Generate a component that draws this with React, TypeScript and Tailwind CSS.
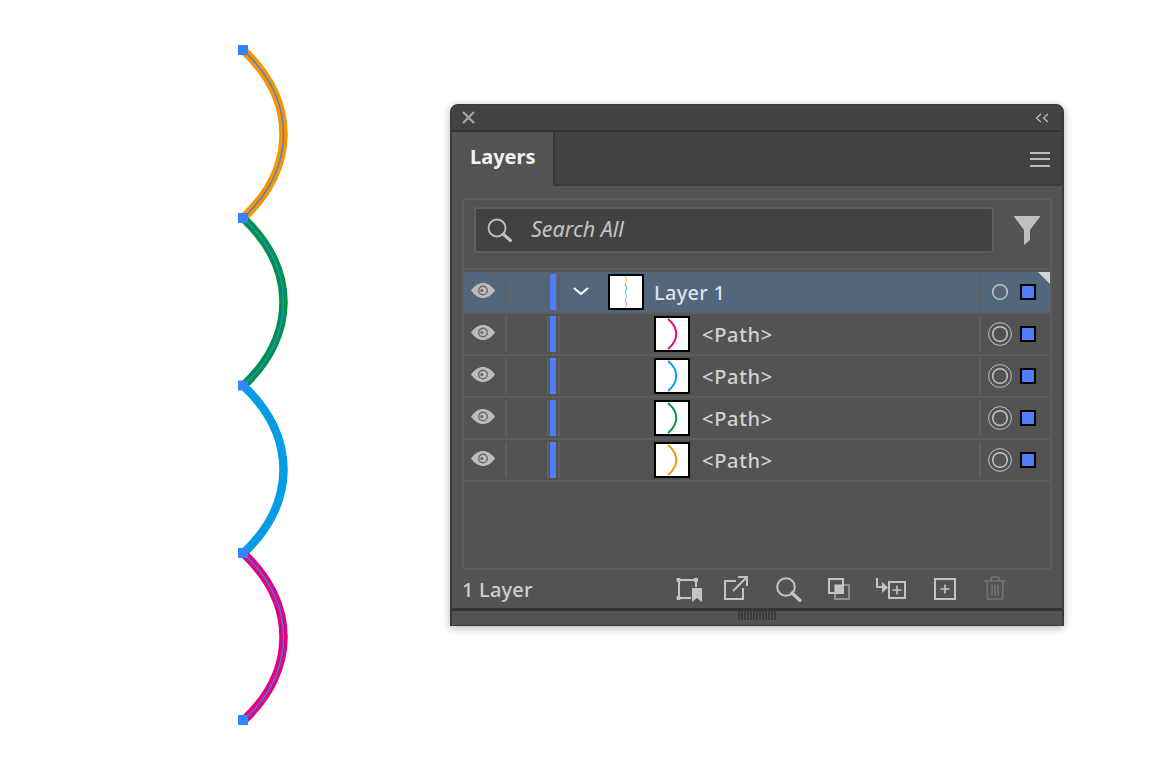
const FONT = "[font-family:'Noto_Sans',sans-serif]";

const curves = [
  { y: 10, color: "#f79400", line: "#2f86f0" },
  { y: 178, color: "#009245", line: "#2f86f0" },
  { y: 345.5, color: "#009fe3", line: "#1f90f0" },
  { y: 513, color: "#e6007e", line: "#2f86f0" },
];

function Curves() {
  return (
    <svg width="70" height="690" viewBox="0 0 70 690" className="ml-[230px] mt-[40px] shrink-0">
      {curves.map((c) => {
        const d = `M13 ${c.y} C 67 ${c.y + 50} 67 ${c.y + 118} 13 ${c.y + 168}`;
        return (
          <g key={c.y} fill="none">
            <path d={d} stroke={c.color} strokeWidth="8.5" />
            <path d={d} stroke={c.line} strokeWidth="1.3" />
          </g>
        );
      })}
      {[10, 178, 345.5, 513, 680].map((y) => (
        <rect key={y} x="8" y={y - 5} width="10" height="10" fill="#2f86ff" />
      ))}
    </svg>
  );
}

function Eye() {
  return (
    <svg width="24" height="15" viewBox="0 0 24 15">
      <path d="M0 7.5 C 5 1 9 0 12 0 C 15 0 19 1 24 7.5 C 19 14 15 15 12 15 C 9 15 5 14 0 7.5 Z" fill="#bcbcbc" />
      <circle cx="12" cy="7.5" r="5" fill="#6a6a6a" />
      <circle cx="12" cy="7.5" r="3.6" fill="#bcbcbc" />
      <circle cx="10.8" cy="7.5" r="1.5" fill="#666666" />
    </svg>
  );
}

function Thumb({ color }: { color: string }) {
  return (
    <div className="w-[36px] h-[36px] bg-white border-2 border-black shrink-0">
      <svg width="32" height="32" viewBox="0 0 32 32" className="block">
        <path d="M12 1 C 23 10 23 22 12 31" fill="none" stroke={color} strokeWidth="1.9" />
      </svg>
    </div>
  );
}

function LayerThumb() {
  return (
    <div className="w-[36px] h-[36px] bg-white border-2 border-black shrink-0">
      <svg width="32" height="32" viewBox="0 0 32 32" className="block" fill="none" strokeWidth="1">
        <path d="M15 0 C 17 3 17 6 15 8" stroke="#f7a850" />
        <path d="M15 8 C 17 11 17 14 15 16" stroke="#30a870" />
        <path d="M15 16 C 17 19 17 22 15 24" stroke="#4cbcf0" />
        <path d="M15 24 C 17 27 17 30 15 32" stroke="#f060a8" />
      </svg>
    </div>
  );
}

function Row({
  selected,
  color,
}: {
  selected?: boolean;
  color?: string;
}) {
  return (
    <div className={`relative flex h-[42px] border-b-2 border-[#5c5c5c] ${selected ? "bg-[#52667c]" : ""}`}>
      <div className="w-[41px] shrink-0 flex items-center justify-center pr-[3px] pb-[4px]">
        <Eye />
      </div>
      <div className="w-[42px] shrink-0 my-[2px] border-l-2 border-[#5f5f5f]" />
      <div className="w-[13px] shrink-0 my-[2px] border-x-2 border-[#5f5f5f] flex pl-[1px]">
        <div className="w-[6px] bg-[#4f7dff]" />
      </div>
      {selected ? (
        <div className="flex items-center flex-1">
          <svg width="16" height="8" viewBox="0 0 16 8" className="ml-[13px] mb-[2px]">
            <path d="M1 1 L8 7 L15 1" fill="none" stroke="#fff" strokeWidth="2" />
          </svg>
          <div className="ml-[19px]">
            <LayerThumb />
          </div>
          <span className="ml-[10px] pt-[2px] text-[20px] font-medium tracking-[0.3px] text-[#dde2e8]">Layer 1</span>
        </div>
      ) : (
        <div className="flex items-center flex-1 pl-[94px]">
          <Thumb color={color as string} />
          <span className="ml-[12px] pt-[2px] text-[20px] font-medium tracking-[0.7px] text-[#d2d2d2]">{"<Path>"}</span>
        </div>
      )}
      <div className="w-[71px] shrink-0 my-[2px] border-l-2 border-[#5f5f5f] flex items-center">
        <svg width="24" height="24" viewBox="0 0 24 24" className="ml-[7px]">
          {selected ? (
            <circle cx="12" cy="12" r="7.3" fill="none" stroke="#c4c4c4" strokeWidth="1.5" />
          ) : (
            <g fill="none" stroke="#c4c4c4">
              <circle cx="12" cy="12" r="11.4" strokeWidth="1" />
              <circle cx="12" cy="12" r="7.3" strokeWidth="1.5" />
            </g>
          )}
        </svg>
        <div className="ml-[8px] w-[16px] h-[16px] bg-[#4f7dff] border-2 border-black" />
      </div>
      {selected && (
        <svg width="12" height="12" viewBox="0 0 12 12" className="absolute right-0 top-0">
          <path d="M0 0 H12 V12 Z" fill="#d4d4d4" />
        </svg>
      )}
    </div>
  );
}

function FooterIcons() {
  return (
    <div className="flex items-start absolute left-[214px] top-[6px]">
      <svg width="26" height="25" viewBox="0 0 26 25" className="mt-[2px]">
        <g fill="none" stroke="#c4c4c4" strokeWidth="2">
          <path d="M3 2 H20 M3 2 V20 M3 20 H15 M20 2 V9" />
        </g>
        <g fill="#c4c4c4">
          <rect x="0.5" y="0" width="4" height="4" rx="1" />
          <rect x="18" y="0" width="4" height="4" rx="1" />
          <rect x="0.5" y="18" width="4" height="4" rx="1" />
          <path d="M16 10 H26 V24 L21 20 L16 24 Z" />
        </g>
      </svg>
      <svg width="24" height="24" viewBox="0 0 24 24" className="ml-[22px]">
        <g fill="none" stroke="#c4c4c4" strokeWidth="2">
          <path d="M12 5 H1 V23 H19 V12" />
          <path d="M9 15 L22 2 M14 1 H23 V10" />
        </g>
      </svg>
      <svg width="26" height="25" viewBox="0 0 26 25" className="ml-[28px] mt-[1px]">
        <circle cx="10" cy="10" r="8.8" fill="none" stroke="#c4c4c4" strokeWidth="2" />
        <path d="M16 16 L24 23.5" stroke="#c4c4c4" strokeWidth="3.2" strokeLinecap="round" />
      </svg>
      <svg width="22" height="22" viewBox="0 0 22 22" className="ml-[26px] mt-[2px]">
        <rect x="7" y="7" width="14" height="14" fill="none" stroke="#8f8f8f" strokeWidth="2" />
        <rect x="1" y="1" width="14" height="14" fill="none" stroke="#c4c4c4" strokeWidth="2" />
        <rect x="7" y="7" width="8" height="8" fill="#c4c4c4" />
      </svg>
      <svg width="30" height="21" viewBox="0 0 30 21" className="ml-[26px] mt-[2px]">
        <path d="M1 0 V9 H6" fill="none" stroke="#c4c4c4" strokeWidth="2" />
        <path d="M6 4 L12 9.5 L6 15 Z" fill="#c4c4c4" />
        <rect x="13" y="4" width="16" height="16" fill="none" stroke="#c4c4c4" strokeWidth="2" />
        <path d="M21 7.5 V16.5 M16.5 12 H25.5" stroke="#c4c4c4" strokeWidth="1.6" />
      </svg>
      <svg width="22" height="22" viewBox="0 0 22 22" className="ml-[28px] mt-[2px]">
        <rect x="1" y="1" width="20" height="20" fill="none" stroke="#c4c4c4" strokeWidth="2" />
        <path d="M11 6.5 V15.5 M6.5 11 H15.5" stroke="#c4c4c4" strokeWidth="1.6" />
      </svg>
      <svg width="22" height="24" viewBox="0 0 22 24" className="ml-[28px]">
        <g fill="none" stroke="#737373" strokeWidth="1.6">
          <path d="M0 5 H22 M7 5 V2 Q7 1 8 1 H14 Q15 1 15 2 V5" />
          <path d="M3 5 L3.5 23 H18.5 L19 5" />
          <path d="M8 8.5 V19.5 M11 8.5 V19.5 M14 8.5 V19.5" />
        </g>
      </svg>
    </div>
  );
}

function LayersPanel() {
  return (
    <div className={`ml-[150px] mt-[104px] w-[614px] h-[522px] shrink-0 flex flex-col border-x-2 border-t border-b border-[#3b3b3b] rounded-t-[8px] bg-[#535353] shadow-[0_2px_8px_rgba(0,0,0,0.3)] ${FONT}`}>
      <div className="h-[27px] shrink-0 bg-[#424242] border-b-2 border-[#353535] rounded-t-[7px] flex items-center justify-between pl-[10px] pr-[13px]">
        <svg width="13" height="13" viewBox="0 0 13 13">
          <path d="M1 1 L12 12 M12 1 L1 12" stroke="#a6a6a6" strokeWidth="2.2" />
        </svg>
        <svg width="14" height="10" viewBox="0 0 14 10">
          <path d="M6 1 L1.5 5 L6 9 M13 1 L8.5 5 L13 9" fill="none" stroke="#bdbdbd" strokeWidth="1.3" />
        </svg>
      </div>
      <div className="h-[54px] shrink-0 flex bg-[#424242]">
        <div className="w-[103px] h-[54px] bg-[#535353] border-r-2 border-[#383838] flex items-center pl-[18px] pb-[4px]">
          <span className="text-[20px] font-bold text-[#f2f2f2]">Layers</span>
        </div>
        <div className="flex-1 border-b-2 border-[#383838] flex items-center justify-end pt-[2px] pr-[12px]">
          <div className="w-[20px] flex flex-col gap-[4.5px]">
            <div className="h-[2px] bg-[#bdbdbd]" />
            <div className="h-[2px] bg-[#bdbdbd]" />
            <div className="h-[2px] bg-[#bdbdbd]" />
          </div>
        </div>
      </div>
      <div className="h-[422px] shrink-0 px-[10px] pt-[12px]">
        <div className="h-[372px] border-2 border-[#5c5c5c] rounded-[2px] flex flex-col">
          <div className="h-[68px] shrink-0 flex pl-[10px] pt-[7px]">
            <div className="w-[520px] h-[46px] bg-[#424242] border-2 border-[#5e5e5e] rounded-[3px] flex items-center pl-[11px]">
              <svg width="25" height="24" viewBox="0 0 25 24">
                <circle cx="10" cy="10" r="8.5" fill="none" stroke="#c0c0c0" strokeWidth="1.8" />
                <path d="M16 16 L23.5 22.5" stroke="#c0c0c0" strokeWidth="3" strokeLinecap="round" />
              </svg>
              <span className="ml-[19px] pb-[2px] text-[21.5px] italic text-[#c4c4c4]">Search All</span>
            </div>
            <svg width="28" height="29" viewBox="0 0 28 29" className="ml-[19px] mt-[9px]">
              <path d="M0.5 0 H27.5 L17 14 V24 L11 29 V14 Z" fill="#c0c0c0" />
            </svg>
          </div>
          <div className="flex-1 border-t-2 border-[#5c5c5c] pt-[2px]">
            <Row selected />
            <Row color="#e6007e" />
            <Row color="#009fe3" />
            <Row color="#009245" />
            <Row color="#f79400" />
          </div>
        </div>
        <div className="relative h-[38px] flex items-center pt-[2px]">
          <span className="text-[20px] font-medium tracking-[0.2px] text-[#cfcfcf]">1 Layer</span>
          <FooterIcons />
        </div>
      </div>
      <div className="h-[17px] shrink-0 border-t-[3px] border-[#343434] flex justify-center">
        <div className="flex gap-[1px] h-[9px]">
          {Array.from({ length: 13 }).map((_, i) => (
            <div key={i} className="w-[2px] bg-[#3b3b3b]" />
          ))}
        </div>
      </div>
    </div>
  );
}

export default function App() {
  return (
    <div className="flex w-[1151px] h-[759px] bg-white overflow-hidden">
      <Curves />
      <LayersPanel />
    </div>
  );
}
